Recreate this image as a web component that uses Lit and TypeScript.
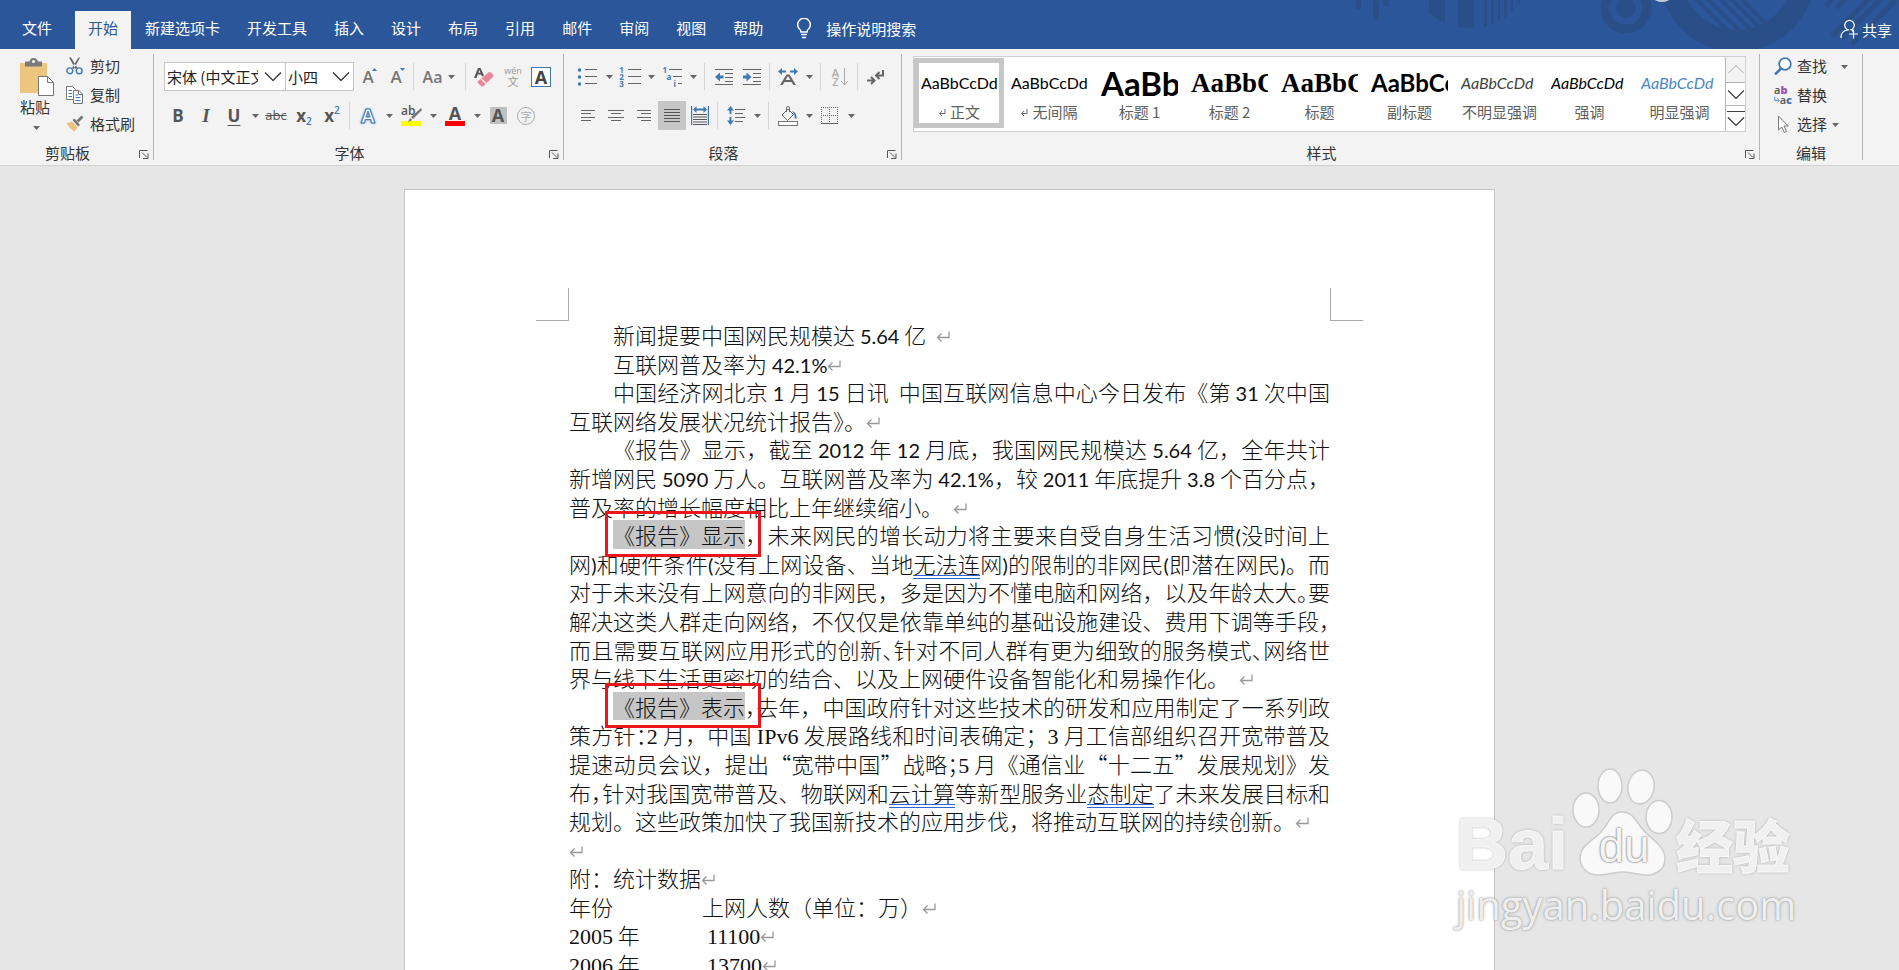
import { LitElement, html, svg, css, nothing, TemplateResult } from "lit";
import { customElement, property, state } from "lit/decorators.js";
import { classMap } from "lit/directives/class-map.js";

const TABS = ["文件", "开始", "新建选项卡", "开发工具", "插入", "设计", "布局", "引用", "邮件", "审阅", "视图", "帮助"];

const STYLES = [
  { name: "正文", look: "body", mark: true },
  { name: "无间隔", look: "body", mark: true },
  { name: "标题 1", look: "h1" },
  { name: "标题 2", look: "h2" },
  { name: "标题", look: "h2" },
  { name: "副标题", look: "sub" },
  { name: "不明显强调", look: "soft" },
  { name: "强调", look: "em" },
  { name: "明显强调", look: "strong" },
];

/* Line markup: {x} grammar mark, [x] selected and boxed, ^x half-width punctuation */
interface Line {
  text: string;
  indent?: boolean;
  end?: boolean;
  song?: boolean;
}

const LINES: Line[] = [
  { text: "新闻提要中国网民规模达 5.64 亿\u00a0 ", indent: true, end: true },
  { text: "互联网普及率为 42.1%", indent: true, end: true },
  { text: "中国经济网北京 1 月 15 日讯\u00a0 中国互联网信息中心今日发布《第 31 次中国", indent: true },
  { text: "互联网络发展状况统计报告》。", end: true },
  { text: "《报告》显示，截至 2012 年 12 月底，我国网民规模达 5.64 亿，全年共计", indent: true },
  { text: "新增网民 5090 万人。互联网普及率为 42.1%，较 2011 年底提升 3.8 个百分点，" },
  { text: "普及率的增长幅度相比上年继续缩小。\u00a0 ", end: true },
  { text: "[《报告》显示]，未来网民的增长动力将主要来自受自身生活习惯(没时间上", indent: true },
  { text: "网)和硬件条件(没有上网设备、当地{无法连}网)的限制的非网民(即潜在网民)。而" },
  { text: "对于未来没有上网意向的非网民，多是因为不懂电脑和网络，以及年龄太大^。要" },
  { text: "解决这类人群走向网络，不仅仅是依靠单纯的基础设施建设、费用下调等手段^，" },
  { text: "而且需要互联网应用形式的创新^、针对不同人群有更为细致的服务模式^、网络世" },
  { text: "界与线下生活更密切的结合、以及上网硬件设备智能化和易操作化。\u00a0 ", end: true },
  { text: "[《报告》表示]^，去年，中国政府针对这些技术的研发和应用制定了一系列政", indent: true, song: true },
  { text: "策方针^：2 月，中国 IPv6 发展路线和时间表确定；3 月工信部组织召开宽带普及", song: true },
  { text: "提速动员会议，提出“宽带中国”战略^；5 月《通信业“十二五”发展规划》发", song: true },
  { text: "布^，针对我国宽带普及、物联网和{云计算}等新型服务业{态制定}了未来发展目标和", song: true },
  { text: "规划。这些政策加快了我国新技术的应用步伐，将推动互联网的持续创新。", end: true, song: true },
  { text: "", end: true },
  { text: "附：统计数据", end: true, song: true },
];

const DATA = [
  ["2005", "11100"],
  ["2006", "13700"],
  ["2007", "21000"],
];

const caret = html`<svg class="caret" width="7" height="4" viewBox="0 0 7 4"><path d="M0 0h7L3.500 4z" fill="#666" /></svg>`;
const pilcrow = html`<svg class="ret" width="14" height="12" viewBox="0 0 14 12"><path d="M13 0.500V6.500H1.500M5.500 2.500L1.500 6.500L5.500 10.500" fill="none" stroke="#999" stroke-width="1.300" /></svg>`;
const launcher = html`<svg width="10" height="9" viewBox="0 0 10 9"><path d="M0.500 8V0.500H8.500M3 2.500L8 7.500M9 3.500V8.500H4" fill="none" stroke="#555" /></svg>`;

const stroke = (d: string, color = "#666", w = 1) => svg`<path d=${d} fill="none" stroke=${color} stroke-width=${w} />`;
const icon = (w: number, h: number, body: unknown) => html`<svg width=${w} height=${h} viewBox="0 0 ${w} ${h}">${body}</svg>`;
const BLUE = "#3f78b5";

const icons = {
  cut: icon(18, 18, svg`<path d="M3 0.500L5 0.500L11.500 11L9.500 12zM14 0.500L12.500 0.500L6 11L8 12z" fill="#666"/>
    <circle cx="3.800" cy="13.800" r="2.900" fill="none" stroke=${BLUE} stroke-width="1.400"/><circle cx="13.200" cy="13.800" r="2.900" fill="none" stroke=${BLUE} stroke-width="1.400"/>`),
  copy: icon(18, 18, svg`<path d="M0.500 0.500H6.500L9.500 3.500V13.500H0.500z" fill="#fff" stroke="#777"/>${stroke("M2.500 4.500H6M2.500 7.500H6M2.500 10.500H6", BLUE)}
    <path d="M7.500 4.500H13L16.500 8V17.500H7.500z" fill="#fff" stroke="#777"/>${stroke("M12.500 4.500V8.500H16.500", "#777")}${stroke("M9.500 9H12M9.500 11.500H14.500M9.500 14.500H14.500", BLUE)}`),
  brush: icon(18, 18, svg`<path d="M0.500 8.500L6 6.500L11.500 12.500L8.500 16.500Q3 13 0.500 8.500z" fill="#ecc07b"/>
    <path d="M6.500 5L8.500 3.500L14 10L12 11.500z" fill="#777"/><path d="M10.500 5.500L15.500 0.500L17.500 2.500L12.500 7.500z" fill="#777"/>`),
  paste: icon(36, 38, svg`<path d="M1 5H28V35H1z" fill="#ecc67f"/><path d="M6 3.500H10.500Q11 0 14.500 0T19 3.500H23V8.500H6z" fill="#7a7a7a"/><circle cx="14.500" cy="3.500" r="1.600" fill="#f3f3f3"/>
    <path d="M19.500 18.500H28.500L34.500 24.500V37.500H19.500z" fill="#fff" stroke="#777"/>${stroke("M28.500 18.500V24.500H34.500", "#777")}`),
  erase: icon(22, 22, svg`<path d="M4 15L14.500 6.500Q16 5.500 17.500 7L19 8.500Q20 10 18.500 11.500L9.500 20Q8 21 7 20L4 17Q3.500 16 4 15z" fill="#e8899b"/><path d="M7 12.500L12 17.500" stroke="#f3f3f3" stroke-width="1.200"/>
    <path d="M0 12L4 2H6.500L10 9.500L8 10.500L7 8.500H3.800L2.500 12zM4.500 6.800H6.500L5.300 3.800z" fill="#555"/>`),
  bullets: icon(20, 18, svg`<rect x="0" y="0.500" width="3" height="3" fill=${BLUE}/><rect x="0" y="7.500" width="3" height="3" fill=${BLUE}/><rect x="0" y="14.500" width="3" height="3" fill=${BLUE}/>${stroke("M7 1.500H19M7 8.500H19M7 15.500H19")}`),
  outdent: icon(18, 18, svg`${stroke("M0 1.500H18M10 5.500H18M10 9.500H18M10 13.500H18M0 16.500H18")}<path d="M0 9L5 4.500V7.500H8.500V10.500H5V13.500z" fill=${BLUE}/>`),
  indent: icon(18, 18, svg`${stroke("M0 1.500H18M10 5.500H18M10 9.500H18M10 13.500H18M0 16.500H18")}<path d="M8.500 9L3.500 4.500V7.500H0V10.500H3.500V13.500z" fill=${BLUE}/>`),
  scale: icon(20, 18, svg`<path d="M2 17L8.500 6.500H11.500L18 17H15.500L13.500 14H6.500L4.500 17zM7.700 12H12.300L10 8z" fill="#666"/>
    <path d="M0 3.500L4 0V2.500H8V4.500H4V7zM20 3.500L16 0V2.500H12V4.500H16V7z" fill=${BLUE}/>`),
  mark: icon(18, 16, svg`${stroke("M16 1V6.500H10M12.500 3L9 6.500L12.500 10", "#666", 2)}${stroke("M0 11.500H6M4 8L7.500 11.500L4 15", "#666", 2)}`),
  left: icon(14, 12, stroke("M0 0.500H14M0 3.500H10M0 7.500H14M0 10.500H10")),
  center: icon(16, 12, stroke("M0 0.500H16M3 3.500H13M0 7.500H16M3 10.500H13")),
  right: icon(14, 12, stroke("M0 0.500H14M4 3.500H14M0 7.500H14M4 10.500H14")),
  justify: icon(16, 13, stroke("M0 0.500H16M0 3.500H16M0 6.500H16M0 9.500H16M0 12.500H16", "#555")),
  spread: icon(18, 19, svg`${stroke("M0.500 0V19M17.500 0V19", BLUE, 1.400)}<path d="M2 3.500L5.500 0V2.500H12.500V0L16 3.500L12.500 7V4.500H5.500V7z" fill=${BLUE}/>${stroke("M2 8.500H16M2 11H16M2 13.500H16M2 16H16M2 18.500H16", "#555")}`),
  spacing: icon(18, 19, svg`<path d="M3.500 0L7 4.500H4.500V8H2.500V4.500H0zM3.500 19L7 14.500H4.500V11H2.500V14.500H0z" fill=${BLUE}/>${stroke("M8 3.500H18M8 7.500H16M8 11.500H18M8 15.500H16")}`),
  fill: icon(20, 20, svg`${stroke("M4 9L10 3L15.500 8.500L9.500 14.500zM8.500 6V1.500Q8.500 0.500 10 0.500T11.500 2V6")}<path d="M14 5Q19 6 18.500 13Q16 13 16.500 9z" fill=${BLUE}/><rect x="0.500" y="15.500" width="19" height="4" fill="#fff" stroke="#777"/>`),
  borders: icon(18, 17, svg`<path d="M0.500 0V16M8.500 0V16M16.500 0V16M0 0.500H17M0 8.500H17" fill="none" stroke="#666" stroke-dasharray="1 1"/>${stroke("M0 16.500H17")}`),
  find: icon(18, 18, svg`<circle cx="11" cy="7" r="5.800" fill="#fff" stroke=${BLUE} stroke-width="1.800"/>${stroke("M7 11.500L1 17.500", BLUE, 2.500)}`),
  pointer: icon(18, 19, svg`<path d="M4.500 1V15L7.800 12L10.200 17.500L12.500 16.500L10 11H14.200z" fill="#fff" stroke="#777"/>`),
  bulb: icon(16, 21, svg`${stroke("M5 14Q5 12 3 10.500A6.300 6.300 0 1 1 13 10.500Q11 12 11 14zM5 16.500H11M6 19.500H10", "#fff", 1.500)}`),
  person: icon(18, 20, svg`${stroke("M9 11A4.800 4.800 0 1 1 10 11M1 19Q1 11.500 8 11M12 11Q13 12 13.500 13M13.500 10.500V19.500M9 15H18", "#fff", 1.200)}`),
};

@customElement("ribbon-group")
class RibbonGroup extends LitElement {
  @property() label = "";
  @property({ type: Boolean }) launch = false;

  static styles = css`
    :host { display: flex; position: relative; padding: 5px 0; }
    .group { display: flex; flex-direction: column; flex: 1; border-right: 1px solid #b5b5b5; min-width: 0; }
    .body { flex: 1; min-width: 0; }
    .foot { display: flex; align-items: center; height: 14px; }
    .name { flex: 1; text-align: center; font-size: 15px; line-height: 14px; color: #333; }
    .open { width: 18px; border: 0; background: none; padding: 3px 0 0; display: flex; justify-content: center; }
  `;

  render() {
    return html`<section class="group" aria-label=${this.label}>
      <div class="body"><slot></slot></div>
      <div class="foot">
        <span class="name">${this.label}</span>
        ${this.launch ? html`<button class="open" aria-label="${this.label}选项">${launcher}</button>` : nothing}
      </div>
    </section>`;
  }
}

@customElement("doc-page")
class DocPage extends LitElement {
  static styles = css`
    :host { display: block; }
    .sheet { width: 1091px; box-sizing: border-box; margin: 0 auto; padding: 98px 164px 90px; background: #fff; border: 1px solid #c6c6c6; min-height: 1543px; color: #111; font-family: "Noto Sans CJK SC", sans-serif; font-weight: 300; }
    .marks { display: flex; justify-content: space-between; margin: 0 -33px -1px; }
    .corner { width: 32px; height: 32px; border-bottom: 1px solid #aaa; }
    .corner.l { border-right: 1px solid #aaa; }
    .corner.r { border-left: 1px solid #aaa; }
    .text, table { font-size: 22px; line-height: 1.3; }
    .line { display: block; min-height: 1.3em; white-space: nowrap; text-align: justify; text-align-last: justify; }
    .line.end { text-align-last: left; }
    .line.indent { padding-left: 2em; }
    .latin { font-family: Lato, sans-serif; font-size: 20px; line-height: 1; font-weight: 400; }
    .song { font-family: "Liberation Serif", serif; line-height: 1; }
    .half { font-feature-settings: "halt"; }
    .gram { background: linear-gradient(#2b66d9 0 0) 0 100% / 100% 1px no-repeat, linear-gradient(#2b66d9 0 0) 0 calc(100% - 3px) / 100% 1px no-repeat; }
    .picked { display: inline-block; position: relative; background: #c6c6c6; line-height: 1.3; text-align-last: left; }
    .picked::after { content: ""; position: absolute; inset: -9px -16px -8px -8px; border: 3px solid #ec151c; }
    .ret { vertical-align: 1px; }
    table { border-collapse: collapse; }
    th, td { padding: 0; text-align: left; font-weight: inherit; white-space: nowrap; }
    .year { min-width: 133px; }
    td.count { padding-left: 5px; }
  `;

  private parse(line: Line): TemplateResult[] {
    const parts = line.text.match(/\[[^\]]+\]|\{[^}]+\}|\^.|[A-Za-z0-9.%()]+|[^A-Za-z0-9.%()[{^]+/g) ?? [];
    return parts.map((p) => {
      if (p[0] === "[") return html`<span class="picked">${p.slice(1, -1)}</span>`;
      if (p[0] === "{") return html`<span class="gram">${p.slice(1, -1)}</span>`;
      if (p[0] === "^") return html`<span class="half">${p.slice(1)}</span>`;
      if (/^[A-Za-z0-9.%()]/.test(p)) return html`<span class=${line.song ? "song" : "latin"}>${p}</span>`;
      return html`${p}`;
    });
  }

  render() {
    return html`<article class="sheet">
      <div class="marks"><div class="corner l"></div><div class="corner r"></div></div>
      <div class="text">
        ${LINES.map((l) => html`<span class=${classMap({ line: true, indent: !!l.indent, end: !!l.end })}>${this.parse(l)}${l.end ? pilcrow : nothing}</span>`)}
      </div>
      <table>
        <tr><th class="year" scope="col">年份</th><th scope="col">上网人数（单位：万）${pilcrow}</th></tr>
        ${DATA.map(([y, n]) => html`<tr><td><span class="song">${y}</span> 年</td><td class="count"><span class="song">${n}</span>${pilcrow}</td></tr>`)}
      </table>
    </article>`;
  }
}

@customElement("app-root")
class AppRoot extends LitElement {
  @state() private tab = "开始";
  @state() private style_ = "正文";

  static styles = css`
    :host { display: flex; flex-direction: column; height: 100vh; overflow: hidden; background: #e6e6e6; font-family: "Noto Sans CJK SC", sans-serif; font-size: 15px; color: #333; }
    button { font: inherit; color: inherit; border: 0; background: none; padding: 0; }
    svg { display: block; }
    .top { position: relative; display: flex; align-items: flex-end; height: 49px; flex: none; background: #2b579a; color: #fff; overflow: hidden; }
    .deco { position: absolute; top: 0; right: 0; }
    .tabs { display: flex; gap: 1px; }
    .tab { height: 38px; padding: 0 13px 5px; line-height: 20px; white-space: nowrap; }
    .tab.file { padding: 0 22px 5px; }
    .tab.on { background: #f3f3f3; color: #2b579a; }
    .ask { display: flex; align-items: center; gap: 14px; height: 35px; padding-bottom: 3px; margin-left: 20px; flex: 1; }
    .ask input { font: inherit; line-height: 18px; height: 20px; color: #fff; background: none; border: 0; padding: 0; width: 120px; }
    .ask input::placeholder { color: #fff; opacity: 1; }
    .share { position: relative; display: flex; align-items: center; gap: 4px; height: 38px; padding: 0 7px 2px 0; }

    .ribbon { display: flex; flex: none; height: 116px; background: #f3f3f3; border-bottom: 1px solid #d2d2d2; }
    .clip { width: 154px; }
    .font { width: 410px; }
    .para { width: 338px; }
    .gallery { flex: 1; min-width: 0; }
    .edit { width: 103px; }
    .rest { width: 36px; }

    .clipboard { display: flex; gap: 9px; padding-left: 19px; }
    .paste { display: flex; flex-direction: column; align-items: center; width: 36px; padding-top: 4px; line-height: 22px; }
    .paste span { margin-right: 4px; }
    .paste .caret { margin: 8px 2px 0 0; }
    .list { display: flex; flex-direction: column; }
    .clipboard .list { padding-left: 2px; }
    .item { display: flex; align-items: center; gap: 6px; height: 29px; padding-bottom: 5px; line-height: 20px; white-space: nowrap; }
    .edit .list { padding-left: 14px; }
    .edit .item { gap: 5px; }
    .edit .item .caret { margin: 2px 0 0 0; }
    .edit .item.wide .caret { margin-left: 9px; }

    .rows { display: flex; flex-direction: column; gap: 10px; padding: 8px 0 0 10px; }
    .row { display: flex; align-items: center; height: 29px; }
    .btn { display: flex; align-items: center; justify-content: center; width: 28px; height: 29px; flex: none; line-height: 1; font-family: "Open Sans", sans-serif; color: #555; }
    .btn.on { background: #c6c6c6; }
    .dd { width: 14px; }
    .w30 { width: 30px; }
    .w44 { width: 44px; gap: 6px; font-size: 16px; font-weight: 600; color: #777; }
    .sep { width: 1px; height: 27px; margin: 0 3px; background: #d5d5d5; flex: none; }
    .sep.wide { margin: 0 5px 0 4px; }
    .sep.mid { margin: 0 4px 0 3px; }
    .combo { position: relative; display: block; height: 29px; }
    .combo select { appearance: none; box-sizing: border-box; width: 100%; height: 100%; margin: 0; padding: 0 27px 0 2px; border: 1px solid #c6c6c6; border-radius: 0; background: #fff; font: inherit; color: #222; overflow: hidden; }
    .combo svg { position: absolute; right: 4px; top: 10px; pointer-events: none; }
    .face { width: 122px; }
    .size { width: 69px; margin-left: -1px; }
    .grow { position: relative; font-size: 17px; font-weight: 600; color: #777; }
    .tri { position: absolute; top: 6px; right: 5px; }
    .bold { font-weight: 700; font-size: 17px; }
    .ital { font-family: "Liberation Serif", serif; font-style: italic; font-weight: 700; font-size: 19px; }
    .undl { font-weight: 700; font-size: 17px; text-decoration: underline; text-underline-offset: 3px; text-decoration-thickness: 1px; }
    .strike { font-size: 13px; text-decoration: line-through; }
    .script { font-weight: 700; font-size: 17px; }
    .script sub, .script sup { font-size: 10px; font-weight: 600; color: #3f78b5; line-height: 1; }
    .script sub { margin-top: 10px; }
    .script sup { margin-bottom: 12px; }
    .glow { font-size: 20px; font-weight: 700; color: #fff; -webkit-text-stroke: 1px #3f78b5; text-shadow: 0 0 2px #4f90d8, 0 0 3px #6ba3e0; }
    .bar { display: block; width: 20px; height: 20px; text-align: center; font-size: 18px; line-height: 15px; font-weight: 700; box-sizing: border-box; border-bottom: 5px solid red; }
    .bar.pen { position: relative; font-size: 12px; line-height: 10px; font-weight: 600; text-align: left; border-color: #ff0; }
    .pen svg { position: absolute; left: 5px; top: 2px; }
    .shade { display: block; width: 17px; height: 17px; background: #c0c0c0; font-weight: 700; font-size: 18px; line-height: 17px; text-align: center; }
    .boxed { display: block; box-sizing: border-box; width: 20px; height: 20px; border: 1px solid #3f78b5; background: #fff; font-weight: 700; font-size: 18px; line-height: 18px; text-align: center; color: #444; }
    .ring { display: block; width: 16px; height: 16px; border: 1px solid #aaa; border-radius: 50%; font: 11px/16px "Noto Sans CJK SC", sans-serif; text-align: center; color: #aaa; }
    .wen { display: flex; flex-direction: column; align-items: center; font-size: 9px; line-height: 9px; color: #999; }
    .wen b { font: 11px/12px "Noto Sans CJK SC", sans-serif; }
    .nums { display: flex; gap: 4px; align-items: center; color: #3f78b5; font-size: 8px; font-weight: 700; line-height: 7px; }
    .nums span { display: block; }
    .multi { display: block; width: 19px; color: #3f78b5; font-size: 8px; font-weight: 700; line-height: 7px; }
    .multi span { display: flex; align-items: center; gap: 2px; }
    .multi i { flex: 1; height: 1px; background: #666; }
    .multi .b { padding-left: 4px; }
    .multi .c { padding-left: 11px; }
    .az { display: flex; gap: 2px; align-items: center; color: #aaa; font-size: 11px; line-height: 9px; font-weight: 600; }
    .az span { display: block; }

    .shelf { display: flex; margin: 2px 13px 0 11px; border: 1px solid #d0d0d0; background: #fff; height: 74px; }
    .cards { display: flex; flex: 1; min-width: 0; overflow: hidden; }
    .card { box-sizing: border-box; width: 90px; flex: none; height: 70px; margin-top: 1px; border: 5px solid transparent; padding: 0 1px 0 2px; display: flex; flex-direction: column; }
    .card.on { border-color: #c6c6c6; }
    .sample { display: flex; align-items: center; height: 40px; width: 77px; overflow: hidden; color: #000; font-family: Lato, sans-serif; font-size: 16px; line-height: 40px; white-space: nowrap; }
    .h1 { font-size: 33px; font-weight: 700; }
    .h2 { font-family: "Liberation Serif", serif; font-size: 27px; font-weight: 700; }
    .sub { font-size: 24px; font-weight: 700; }
    .soft { font-style: italic; color: #404040; }
    .em { font-style: italic; }
    .strong { font-style: italic; color: #4a86c8; }
    .cap { display: flex; justify-content: center; align-items: center; gap: 4px; line-height: 18px; color: #606060; white-space: nowrap; }
    .scroll { display: grid; grid-template-rows: 26px 23px 1fr; width: 20px; flex: none; }
    .scroll button { display: flex; align-items: center; justify-content: center; border-left: 1px solid #b5b5b5; border-bottom: 1px solid #b5b5b5; background: #fff; }
    .scroll button:first-child { background: #f3f3f3; }
    .scroll button:last-child { border-bottom: 0; }
    .swap { display: block; width: 18px; font: 600 11px/10px "Open Sans", sans-serif; color: #555; }
    .swap span { display: flex; align-items: center; }
    .swap .p { color: #9a57b8; }
    .swap .q { color: #3f78b5; }

    .desk { position: relative; flex: 1; min-height: 0; overflow: hidden; padding-top: 23px; }
    .water { position: absolute; right: 103px; bottom: 39px; width: 340px; color: rgba(250, 250, 250, 0.9); text-shadow: 0 0 3px #999, 0 0 1px #aaa; }
    .brand { display: flex; align-items: flex-end; height: 109px; }
    .bai { font: 700 72px/56px "Liberation Sans", sans-serif; width: 116px; padding-bottom: 7px; -webkit-text-stroke: 1px #f8f8f8; }
    .paw { position: relative; width: 104px; }
    .du { position: absolute; left: 13px; top: 53px; width: 78px; text-align: center; font: 500 46px/52px "Liberation Sans", sans-serif; color: #f4f4f4; text-shadow: 0 0 2px #777, 0 0 2px #888; }
    .jing { font: 900 57px/57px "Noto Sans CJK SC", sans-serif; padding-bottom: 7px; -webkit-text-stroke: 1px #f8f8f8; }
    .url { font: 400 40px/52px "Open Sans", sans-serif; white-space: nowrap; }
  `;

  private dd(label: string) {
    return html`<button class="btn dd" aria-label=${label}>${caret}</button>`;
  }

  private btn(label: string, body: unknown, cls = "") {
    return html`<button class="btn ${cls}" aria-label=${label}>${body}</button>`;
  }

  private deco() {
    const c = "#2a4f88";
    return html`<svg class="deco" width="560" height="49" viewBox="1339 0 560 49" aria-hidden="true">
      <defs>
        <clipPath id="disc"><circle cx="1470" cy="-35.500" r="63.500" /></clipPath>
        <clipPath id="core"><circle cx="1737" cy="-26" r="66" /></clipPath>
      </defs>
      <path fill=${c} d="M1356 0h5v9h-5zM1373 0h6v20h-6zM1383 0h6v6h-6z" />
      <path fill=${c} clip-path="url(#disc)" d="M1429 0h16v40h-16zM1458 0h16v40h-16zM1484 0h3v40h-3zM1491 0h3v40h-3zM1498 0h2v40h-2zM1504 0h3v40h-3zM1511 0h2v40h-2zM1518 0h2v40h-2z" />
      <circle cx="1626" cy="8" r="21" fill="none" stroke=${c} stroke-width="9" /><circle cx="1626" cy="8" r="10" fill=${c} />
      <circle cx="1737" cy="-26" r="67" fill="none" stroke=${c} stroke-width="22" />
      <path clip-path="url(#core)" fill="none" stroke=${c} stroke-width="4" d="M1693 -4L1743 46M1703 -6L1753 44M1713 -8L1763 42M1724 -8L1774 42M1734 -8L1784 42" />
      <path fill="none" stroke=${c} stroke-width="5" d="M1826 6L1838 -6M1836 8L1850 -6M1832 36L1874 -6M1842 38L1886 -6M1852 44L1896 0" />
      <ellipse cx="1662" cy="-2" rx="8" ry="4" fill="#c8cdd4" />
    </svg>`;
  }

  private header() {
    return html`<header class="top">
      ${this.deco()}
      <nav class="tabs" role="tablist">
        ${TABS.map((t) => html`<button role="tab" aria-selected=${t === this.tab} class=${classMap({ tab: true, file: t === "文件", on: t === this.tab })} @click=${() => (this.tab = t)}>${t}</button>`)}
      </nav>
      <label class="ask">${icons.bulb}<input type="text" aria-label="操作说明搜索" placeholder="操作说明搜索" /></label>
      <button class="share">${icons.person}共享</button>
    </header>`;
  }

  private fontGroup() {
    const chev = icon(18, 9, stroke("M1 0.500L9 8.500L17 0.500", "#333", 1.300));
    return html`<ribbon-group class="font" label="字体" launch><div class="rows">
      <div class="row">
        <label class="combo face"><select aria-label="字体"><option>宋体 (中文正文)</option></select>${chev}</label>
        <label class="combo size"><select aria-label="字号"><option>小四</option></select>${chev}</label>
        ${this.btn("增大字号", html`A<svg class="tri" width="5" height="3" viewBox="0 0 5 3"><path d="M0 3L2.500 0L5 3z" fill=${BLUE} /></svg>`, "grow")}
        ${this.btn("减小字号", html`A<svg class="tri" width="5" height="3" viewBox="0 0 5 3"><path d="M0 0L2.500 3L5 0z" fill=${BLUE} /></svg>`, "grow")}
        <span class="sep"></span>
        ${this.btn("更改大小写", html`Aa${caret}`, "w44")}
        <span class="sep wide"></span>
        ${this.btn("清除格式", icons.erase)}
        ${this.btn("拼音指南", html`<span class="wen">wén<b>文</b></span>`)}
        ${this.btn("字符边框", html`<span class="boxed">A</span>`)}
      </div>
      <div class="row">
        ${this.btn("加粗", "B", "bold")}${this.btn("倾斜", "I", "ital")}${this.btn("下划线", html`<span>U</span>`, "undl")}${this.dd("下划线样式")}
        ${this.btn("删除线", html`<span>abc</span>`, "strike")}
        ${this.btn("下标", html`x<sub>2</sub>`, "script")}${this.btn("上标", html`x<sup>2</sup>`, "script")}
        <span class="sep mid"></span>
        ${this.btn("文本效果", "A", "glow")}${this.dd("文本效果样式")}
        ${this.btn("突出显示", html`<span class="bar pen">ab${icon(16, 14, svg`<path d="M15 0L16 2L7 11L5 9zM4 10L6.500 12L2 14z" fill="#777"/>`)}</span>`, "w30")}${this.dd("突出显示颜色")}
        ${this.btn("字体颜色", html`<span class="bar">A</span>`, "w30")}${this.dd("更多字体颜色")}
        ${this.btn("字符底纹", html`<span class="shade">A</span>`)}
        ${this.btn("带圈字符", html`<span class="ring">字</span>`)}
      </div>
    </div></ribbon-group>`;
  }

  private paraGroup() {
    return html`<ribbon-group class="para" label="段落" launch><div class="rows">
      <div class="row">
        ${this.btn("项目符号", icons.bullets)}${this.dd("项目符号样式")}
        ${this.btn("编号", html`<span class="nums"><span><span>1</span><span>2</span><span>3</span></span>${icon(13, 18, stroke("M0 1.500H13M0 8.500H13M0 15.500H13"))}</span>`)}${this.dd("编号样式")}
        ${this.btn("多级列表", html`<span class="multi"><span>1<i></i></span><span class="b">a<i></i></span><span class="c">i<i></i></span></span>`)}${this.dd("多级列表样式")}
        <span class="sep wide"></span>
        ${this.btn("减少缩进", icons.outdent)}${this.btn("增加缩进", icons.indent)}
        <span class="sep mid"></span>
        ${this.btn("中文版式", icons.scale)}${this.dd("中文版式选项")}
        <span class="sep wide"></span>
        ${this.btn("排序", html`<span class="az"><span><span>A</span><span>Z</span></span>${icon(7, 18, stroke("M3.500 0V17M0 13L3.500 17L7 13", "#aaa"))}</span>`)}
        <span class="sep mid"></span>
        ${this.btn("显示编辑标记", icons.mark)}
      </div>
      <div class="row">
        ${this.btn("左对齐", icons.left)}${this.btn("居中", icons.center)}${this.btn("右对齐", icons.right)}${this.btn("两端对齐", icons.justify, "on")}${this.btn("分散对齐", icons.spread)}
        <span class="sep mid"></span>
        ${this.btn("行距", icons.spacing)}${this.dd("行距选项")}
        <span class="sep wide"></span>
        ${this.btn("底纹", icons.fill)}${this.dd("底纹颜色")}
        ${this.btn("边框", icons.borders)}${this.dd("边框样式")}
      </div>
    </div></ribbon-group>`;
  }

  private styleGroup() {
    const small = icon(7, 7, stroke("M6 0V4.500H1M3 2L0.700 4.500L3 7", "#666"));
    return html`<ribbon-group class="gallery" label="样式" launch><div class="shelf">
      <div class="cards">
        ${STYLES.map((s) => html`<button class=${classMap({ card: true, on: s.name === this.style_ })} @click=${() => (this.style_ = s.name)}>
          <span class="sample ${s.look}">AaBbCcDd</span>
          <span class="cap">${s.mark ? small : nothing}${s.name}</span>
        </button>`)}
      </div>
      <div class="scroll">
        <button aria-label="上一行">${icon(16, 9, stroke("M0 8.500L8 0.500L16 8.500", "#aaa"))}</button>
        <button aria-label="下一行">${icon(16, 9, stroke("M0 0.500L8 8.500L16 0.500", "#333", 1.200))}</button>
        <button aria-label="其他">${icon(18, 17, svg`${stroke("M0 1.500H18", "#444")}${stroke("M1 7.500L9 15.500L17 7.500", "#333", 1.200)}`)}</button>
      </div>
    </div></ribbon-group>`;
  }

  render() {
    return html`${this.header()}
      <div class="ribbon">
        <ribbon-group class="clip" label="剪贴板" launch><div class="clipboard">
          <button class="paste">${icons.paste}<span>粘贴</span>${caret}</button>
          <div class="list">
            <button class="item">${icons.cut}剪切</button>
            <button class="item">${icons.copy}复制</button>
            <button class="item">${icons.brush}格式刷</button>
          </div>
        </div></ribbon-group>
        ${this.fontGroup()}${this.paraGroup()}${this.styleGroup()}
        <ribbon-group class="edit" label="编辑"><div class="list">
          <button class="item wide">${icons.find}查找${caret}</button>
          <button class="item"><span class="swap"><span>a<b class="p">b</b></span><span>${icon(7, 8, stroke("M1 0V4.500H6M4 2L6.500 4.500L4 7", BLUE))}a<b class="q">c</b></span></span>替换</button>
          <button class="item">${icons.pointer}选择${caret}</button>
        </div></ribbon-group>
        <div class="rest"></div>
      </div>
      <main class="desk">
        <doc-page></doc-page>
        <div class="water">
          <div class="brand">
            <span class="bai">Bai</span>
            <div class="paw">
              <svg width="104" height="112" viewBox="0 0 104 112">
                <g fill="#f9f9f9" stroke="#ccc" stroke-width="1.500">
                  <ellipse cx="14" cy="43" rx="13" ry="17" /><ellipse cx="38" cy="19" rx="12" ry="17" />
                  <ellipse cx="69" cy="20" rx="13" ry="17" transform="rotate(10 69 20)" /><ellipse cx="87" cy="50" rx="13" ry="16.500" />
                  <path d="M50 45C62 45 64 56 74 66C84 75 94 82 93 93C92 104 82 109 72 108C62 107 58 105 50 105C42 105 38 108 26 108C14 108 8 99 8 91C8 80 18 75 27 67C37 58 38 45 50 45z" />
                </g>
              </svg>
              <span class="du">du</span>
            </div>
            <span class="jing">经验</span>
          </div>
          <div class="url">jingyan.baidu.com</div>
        </div>
      </main>`;
  }
}
